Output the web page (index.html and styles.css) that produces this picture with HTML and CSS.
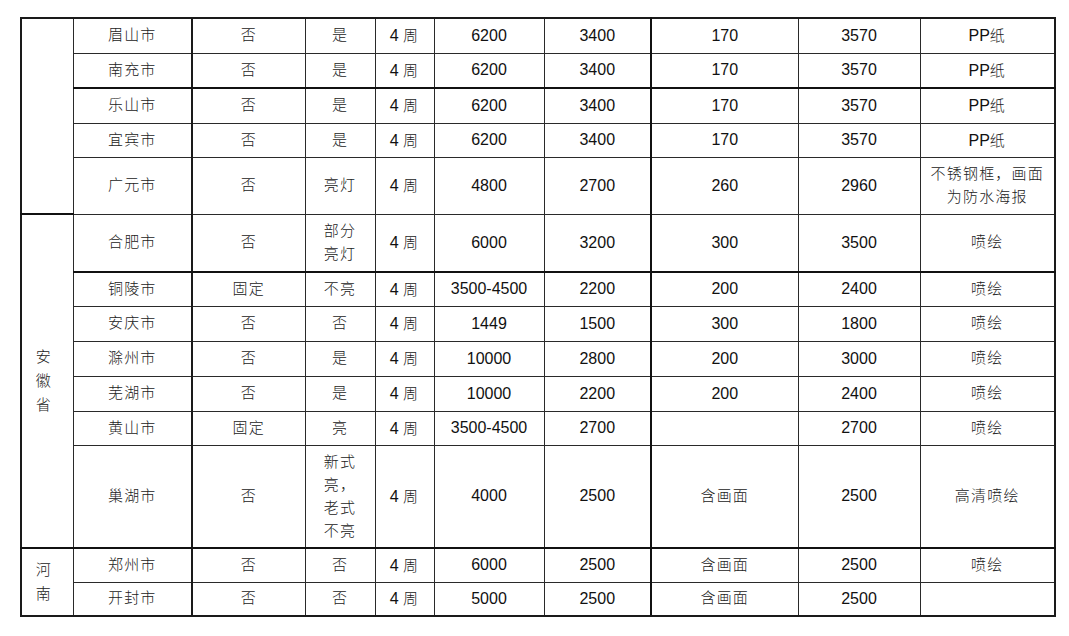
FILE: index.html
```html
<!DOCTYPE html>
<html lang="zh">
<head>
<meta charset="utf-8">
<title>表格</title>
<link rel="stylesheet" href="styles.css">
</head>
<body>
<div class="page">
<table class="grid">
  <colgroup>
    <col class="c-prov"><col class="c-city"><col class="c-fix"><col class="c-light"><col class="c-cycle">
    <col class="c-a"><col class="c-b"><col class="c-c"><col class="c-d"><col class="c-e">
  </colgroup>
  <tbody>
    <tr class="h35">
      <td class="prov" rowspan="5"></td>
      <td class="zh city">眉山市</td><td class="zh">否</td><td class="zh gl">是</td><td>4 <span class="zh">周</span></td>
      <td>6200</td><td class="gr">3400</td><td class="tk">170</td><td>3570</td><td class="end">PP<span class="zh">纸</span></td>
    </tr>
    <tr class="h35 thick">
      <td class="zh city">南充市</td><td class="zh">否</td><td class="zh gl">是</td><td>4 <span class="zh">周</span></td>
      <td>6200</td><td class="gr">3400</td><td class="tk">170</td><td>3570</td><td class="end">PP<span class="zh">纸</span></td>
    </tr>
    <tr class="h35">
      <td class="zh city">乐山市</td><td class="zh">否</td><td class="zh gl">是</td><td>4 <span class="zh">周</span></td>
      <td>6200</td><td class="gr">3400</td><td class="tk">170</td><td>3570</td><td class="end">PP<span class="zh">纸</span></td>
    </tr>
    <tr class="h34">
      <td class="zh city">宜宾市</td><td class="zh">否</td><td class="zh gl">是</td><td>4 <span class="zh">周</span></td>
      <td>6200</td><td class="gr">3400</td><td class="tk">170</td><td>3570</td><td class="end">PP<span class="zh">纸</span></td>
    </tr>
    <tr class="h57">
      <td class="zh city">广元市</td><td class="zh">否</td><td class="zh gl">亮灯</td><td>4 <span class="zh">周</span></td>
      <td>4800</td><td class="gr">2700</td><td class="tk">260</td><td>2960</td><td class="zh multi end">不锈钢框，画面<br>为防水海报</td>
    </tr>
    <tr class="h58 thick">
      <td class="prov zh" rowspan="7">安<br>徽<br>省</td>
      <td class="zh city">合肥市</td><td class="zh">否</td><td class="zh gl multi">部分<br>亮灯</td><td>4 <span class="zh">周</span></td>
      <td>6000</td><td class="gr">3200</td><td class="tk">300</td><td>3500</td><td class="zh end">喷绘</td>
    </tr>
    <tr class="h34">
      <td class="zh city">铜陵市</td><td class="zh">固定</td><td class="zh gl">不亮</td><td>4 <span class="zh">周</span></td>
      <td>3500-4500</td><td class="gr">2200</td><td class="tk">200</td><td>2400</td><td class="zh end">喷绘</td>
    </tr>
    <tr class="h35">
      <td class="zh city">安庆市</td><td class="zh">否</td><td class="zh gl">否</td><td>4 <span class="zh">周</span></td>
      <td>1449</td><td class="gr">1500</td><td class="tk">300</td><td>1800</td><td class="zh end">喷绘</td>
    </tr>
    <tr class="h35">
      <td class="zh city">滁州市</td><td class="zh">否</td><td class="zh gl">是</td><td>4 <span class="zh">周</span></td>
      <td>10000</td><td class="gr">2800</td><td class="tk">200</td><td>3000</td><td class="zh end">喷绘</td>
    </tr>
    <tr class="h35">
      <td class="zh city">芜湖市</td><td class="zh">否</td><td class="zh gl">是</td><td>4 <span class="zh">周</span></td>
      <td>10000</td><td class="gr">2200</td><td class="tk">200</td><td>2400</td><td class="zh end">喷绘</td>
    </tr>
    <tr class="h34">
      <td class="zh city">黄山市</td><td class="zh">固定</td><td class="zh gl">亮</td><td>4 <span class="zh">周</span></td>
      <td>3500-4500</td><td class="gr">2700</td><td class="tk"></td><td>2700</td><td class="zh end">喷绘</td>
    </tr>
    <tr class="h103 thick">
      <td class="zh city">巢湖市</td><td class="zh">否</td><td class="zh gl multi">新式<br>亮，<br>老式<br>不亮</td><td>4 <span class="zh">周</span></td>
      <td>4000</td><td class="gr">2500</td><td class="zh tk">含画面</td><td>2500</td><td class="zh end">高清喷绘</td>
    </tr>
    <tr class="h34">
      <td class="prov zh last" rowspan="2">河<br>南</td>
      <td class="zh city">郑州市</td><td class="zh">否</td><td class="zh gl">否</td><td>4 <span class="zh">周</span></td>
      <td>6000</td><td class="gr">2500</td><td class="zh tk">含画面</td><td>2500</td><td class="zh end">喷绘</td>
    </tr>
    <tr class="h34 bottom">
      <td class="zh city">开封市</td><td class="zh">否</td><td class="zh gl">否</td><td>4 <span class="zh">周</span></td>
      <td>5000</td><td class="gr">2500</td><td class="zh tk">含画面</td><td>2500</td><td class="end"></td>
    </tr>
  </tbody>
</table>
</div>
</body>
</html>
```
FILE: styles.css
```css
html, body {
  margin: 0;
  padding: 0;
  background: #ffffff;
}

.page {
  padding: 17px 0 0 20px;
}

.grid {
  border-collapse: collapse;
  table-layout: fixed;
  width: 1036px;
  font-family: "Liberation Sans", "Noto Sans CJK SC", sans-serif;
  font-size: 16px;
  color: #111;
  border: 2px solid #1a1a1a;
}

.c-prov { width: 52px; }
.c-city { width: 119px; }
.c-fix { width: 113px; }
.c-light { width: 70px; }
.c-cycle { width: 59px; }
.c-a { width: 110px; }
.c-b { width: 107px; }
.c-c { width: 147px; }
.c-d { width: 122px; }
.c-e { width: 135px; }

.grid td {
  border: 1px solid #2a2a2a;
  padding: 0 2px;
  text-align: center;
  vertical-align: middle;
  line-height: 20px;
  white-space: nowrap;
}

.grid .zh {
  font-family: "Noto Sans CJK SC", sans-serif;
  font-weight: 300;
  font-size: 15px;
  letter-spacing: 1.2px;
  color: #222;
}

.grid td.zh {
  padding-bottom: 3px;
}

.grid td.city {
  border-right: 2px solid #1a1a1a;
}

.grid td.gl,
.grid td.gr {
  border-left: 1px solid #7a7a7a;
}

.grid td.tk {
  border-left: 2px solid #111;
}

.grid tr.thick td {
  border-bottom: 2px solid #111;
}

.grid td.prov {
  border-left: 2px solid #1a1a1a;
  border-bottom: 2px solid #111;
  line-height: 24px;
  padding-right: 9px;
}

.grid tr.bottom td,
.grid td.prov.last {
  border-bottom: 2px solid #1a1a1a;
}

.grid td.end {
  border-right: 2px solid #1a1a1a;
}

.grid td.multi {
  line-height: 23px;
  white-space: normal;
}

.h34 { height: 34px; }
.h35 { height: 35px; }
.h57 { height: 57px; }
.h58 { height: 58px; }
.h103 { height: 103px; }
```
